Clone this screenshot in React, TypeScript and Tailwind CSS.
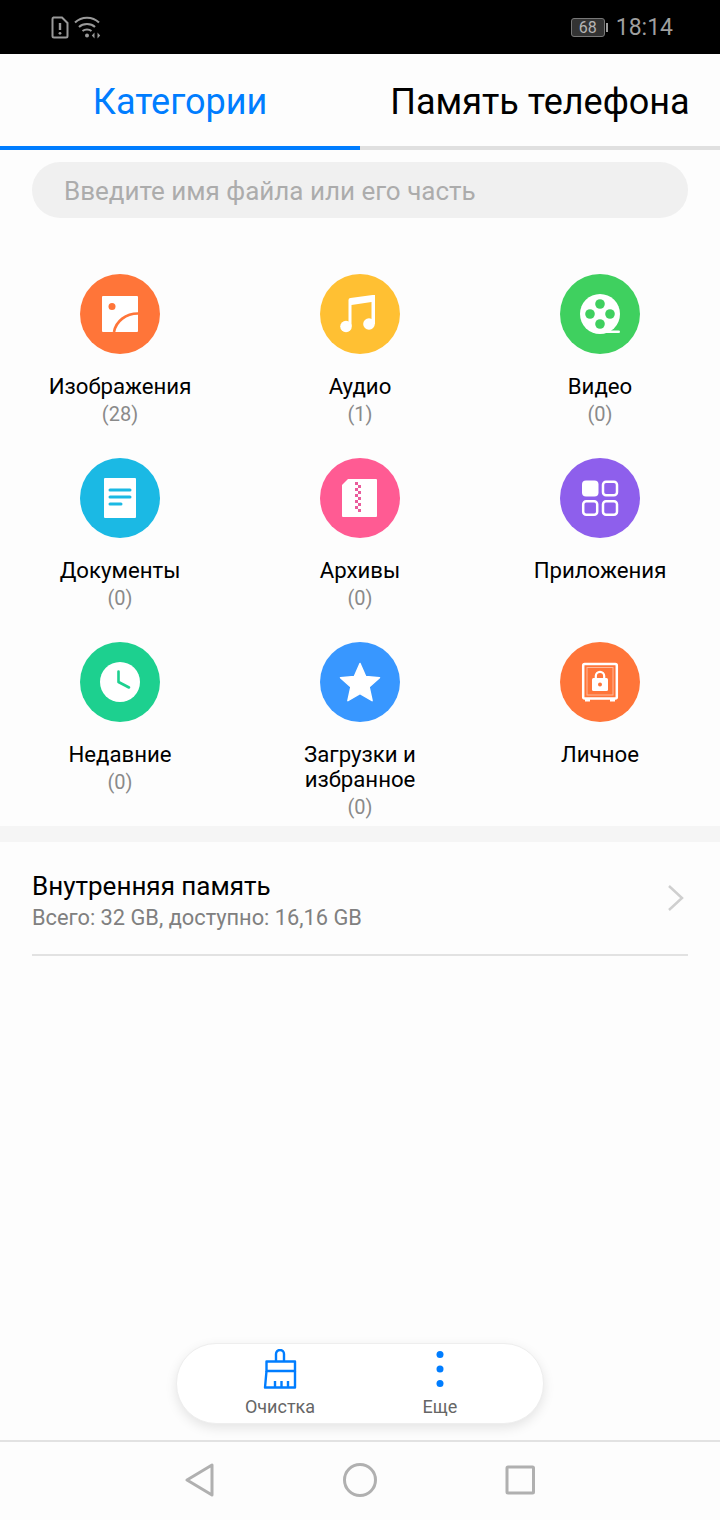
import type { ReactNode } from "react";

type Category = {
  label: ReactNode;
  count?: number;
  bg: string;
  icon: ReactNode;
};

const categories: Category[] = [
  {
    label: "Изображения",
    count: 28,
    bg: "bg-[#ff7539]",
    icon: (
      <>
        <rect x="22" y="22" width="36" height="36" rx="1" fill="#fff" />
        <circle cx="32" cy="32.5" r="3.5" fill="#ff7539" />
        <path d="M34 58C36 47 46 39.5 58 39.5" fill="none" stroke="#ff7539" strokeWidth="2.6" />
      </>
    ),
  },
  {
    label: "Аудио",
    count: 1,
    bg: "bg-[#ffc033]",
    icon: (
      <>
        <circle cx="26" cy="52.5" r="5.8" fill="#fff" />
        <circle cx="49" cy="50" r="5.8" fill="#fff" />
        <path d="M28.5 52V26a2 2 0 0 1 2-2l22-3h2.5v29h-3.5V28l-20 3v21z" fill="#fff" />
      </>
    ),
  },
  {
    label: "Видео",
    count: 0,
    bg: "bg-[#3fd05f]",
    icon: (
      <>
        <circle cx="40" cy="40" r="20" fill="#fff" />
        <rect x="40" y="56.5" width="20" height="2.6" rx="1.3" fill="#fff" />
        <circle cx="40" cy="30" r="4.8" fill="#3fd05f" />
        <circle cx="40" cy="50" r="4.8" fill="#3fd05f" />
        <circle cx="30" cy="40" r="4.8" fill="#3fd05f" />
        <circle cx="50" cy="40" r="4.8" fill="#3fd05f" />
      </>
    ),
  },
  {
    label: "Документы",
    count: 0,
    bg: "bg-[#1bb9e4]",
    icon: (
      <>
        <rect x="24" y="20" width="32" height="40" rx="1" fill="#fff" />
        <path d="M30 32H50M30 39H50M30 46H41" stroke="#1bb9e4" strokeWidth="3" strokeLinecap="round" />
      </>
    ),
  },
  {
    label: "Архивы",
    count: 0,
    bg: "bg-[#ff5b93]",
    icon: (
      <>
        <path d="M28 21H56a1 1 0 0 1 1 1V58a1 1 0 0 1-1 1H23a1 1 0 0 1-1-1V27z" fill="#fff" />
        <path
          d="M35 24h3v3h-3zM38 27h3v3h-3zM35 30h3v3h-3zM38 33h3v3h-3zM35 36h3v3h-3zM38 39h3v3h-3zM35 42h3v3h-3zM38 45h3v3h-3zM35 48h3v3h-3zM38 51h3v3h-3z"
          fill="#ea5c9c"
        />
      </>
    ),
  },
  {
    label: "Приложения",
    bg: "bg-[#8e5fec]",
    icon: (
      <>
        <rect x="22" y="22.5" width="16.5" height="16" rx="4" fill="#fff" />
        <rect x="43" y="23.7" width="14" height="13.6" rx="3" fill="none" stroke="#fff" strokeWidth="2.5" />
        <rect x="23.2" y="43.2" width="14" height="13.6" rx="3" fill="none" stroke="#fff" strokeWidth="2.5" />
        <rect x="43" y="43.2" width="14" height="13.6" rx="3" fill="none" stroke="#fff" strokeWidth="2.5" />
      </>
    ),
  },
  {
    label: "Недавние",
    count: 0,
    bg: "bg-[#1dd08f]",
    icon: (
      <>
        <circle cx="40" cy="40" r="20" fill="#fff" />
        <path d="M38.5 29.5V40L49 45.5" fill="none" stroke="#1dd08f" strokeWidth="2.6" strokeLinecap="round" strokeLinejoin="round" />
      </>
    ),
  },
  {
    label: (
      <>
        Загрузки и
        <br />
        избранное
      </>
    ),
    count: 0,
    bg: "bg-[#3897ff]",
    icon: (
      <path
        d="M40 21.5L45.7 34.5L59.5 35.8L49.1 45L52.1 58.7L40 51.6L27.9 58.7L30.9 45L20.5 35.8L34.3 34.5Z"
        fill="#fff"
        stroke="#fff"
        strokeWidth="1.5"
        strokeLinejoin="round"
      />
    ),
  },
  {
    label: "Личное",
    bg: "bg-[#ff7539]",
    icon: (
      <>
        <rect x="23.2" y="22" width="33.6" height="34.5" rx="1.5" fill="none" stroke="#fff" strokeWidth="2.5" />
        <rect x="27" y="25.5" width="26" height="27.5" fill="none" stroke="#ffb899" strokeWidth="1" />
        <path d="M25 57h5v2.5h-5zM50 57h5v2.5h-5z" fill="#fff" />
        <path d="M35.8 37v-3a4.2 4.2 0 0 1 8.4 0v3" fill="none" stroke="#fff" strokeWidth="2.2" />
        <rect x="32" y="36" width="16" height="13" rx="1.5" fill="#fff" />
        <circle cx="40" cy="42.5" r="2" fill="#ff7539" />
      </>
    ),
  },
];

function CategoryCell({ item }: { item: Category }) {
  return (
    <div className="flex h-[184px] flex-col items-center text-center">
      <div className={`h-20 w-20 rounded-full ${item.bg}`}>
        <svg viewBox="0 0 80 80" className="h-20 w-20">
          {item.icon}
        </svg>
      </div>
      <div className="mt-[20px] text-[22.2px] leading-[25px] text-black">{item.label}</div>
      {item.count !== undefined && (
        <div className="mt-[3px] text-[20px] leading-[25px] text-[#8a8a8a]">({item.count})</div>
      )}
    </div>
  );
}

export default function App() {
  return (
    <div className="flex h-[1520px] w-[720px] flex-col overflow-hidden bg-[#fdfdfd] font-['Roboto',sans-serif]">
      {/* Status bar */}
      <div className="flex h-[54px] items-center justify-between bg-black pl-[51px] pr-[47px]">
        <div className="flex items-center gap-[5px]">
          <svg width="18" height="23" viewBox="0 0 18 23" fill="none">
            <path d="M2.5 1.5H11L16.5 7V20a1.5 1.5 0 0 1-1.5 1.5H3A1.5 1.5 0 0 1 1.5 20V3A1.5 1.5 0 0 1 2.5 1.5Z" stroke="#9a9a9a" strokeWidth="2" />
            <path d="M9 7V14" stroke="#9a9a9a" strokeWidth="2.4" />
            <circle cx="9" cy="17.3" r="1.4" fill="#9a9a9a" />
          </svg>
          <svg width="28" height="24" viewBox="0 0 28 24" fill="none" stroke="#9a9a9a" strokeWidth="2">
            <path d="M1 7.5C7.5 1 18.5 1 25 7.5" />
            <path d="M5 12C9 8 17 8 21 12" />
            <path d="M8.5 16C11 14 15 14 17.5 16" />
            <circle cx="13" cy="20.5" r="2" fill="#9a9a9a" stroke="none" />
            <path d="M20.5 17.5L17.8 20.5L20.5 23.5ZM23.5 17.5L26.2 20.5L23.5 23.5Z" fill="#9a9a9a" stroke="none" />
          </svg>
        </div>
        <div className="flex items-center pt-[1px]">
          <div className="flex h-[19px] w-[34px] items-center justify-center rounded-[3px] border border-[#777] bg-[#333] text-[16px] leading-none text-[#b5b5b5]">
            68
          </div>
          <div className="ml-[1px] h-[9px] w-[2px] bg-[#9a9a9a]" />
          <span className="ml-[8px] text-[23px] leading-none text-[#9f9f9f]">18:14</span>
        </div>
      </div>

      {/* Tabs */}
      <div className="flex h-[96px]">
        <div className="flex w-[360px] items-center justify-center border-b-4 border-[#007dff] pt-[3px] text-[36px] text-[#007dff]">
          Категории
        </div>
        <div className="flex w-[360px] items-center justify-center border-b-4 border-[#e0e0e0] pt-[3px] text-[36px] text-black">
          Память телефона
        </div>
      </div>

      {/* Search */}
      <div className="mx-[32px] mt-[12px] flex h-[56px] items-center rounded-[28px] bg-[#f0f0f0] px-[32px] pt-[2px] text-[26px] text-[#acacac]">
        Введите имя файла или его часть
      </div>

      {/* Categories */}
      <div className="mt-[56px] grid grid-cols-3">
        {categories.map((item, i) => (
          <CategoryCell key={i} item={item} />
        ))}
      </div>

      <div className="h-[16px] bg-[#f5f5f5]" />

      {/* Storage row */}
      <div className="mx-[32px] flex h-[114px] items-center justify-between border-b-2 border-[#e2e2e2]">
        <div className="mt-[7px]">
          <div className="text-[26px] leading-[32px] text-black">Внутренняя память</div>
          <div className="text-[21.8px] leading-[32px] text-[#808080]">Всего: 32 GB, доступно: 16,16 GB</div>
        </div>
        <svg width="18" height="28" viewBox="0 0 18 28" fill="none" stroke="#cfcfcf" strokeWidth="2.5" className="mr-[3px]">
          <path d="M2 2L15 14L2 26" />
        </svg>
      </div>

      <div className="flex-1" />

      {/* Floating toolbar */}
      <div className="mb-[16px] flex justify-center">
        <div className="flex h-[81px] w-[368px] justify-center rounded-[40px] border border-[#eeeeee] bg-white pt-[1px] shadow-[0_4px_12px_rgba(0,0,0,0.1)]">
          <div className="flex w-[160px] flex-col items-center pt-[4px]">
            <svg width="34" height="40" viewBox="0 0 34 40" fill="none" stroke="#007dff" strokeWidth="2.4" strokeLinejoin="round">
              <path d="M13 12V5a4 4 0 0 1 8 0V12" />
              <path d="M3.5 12.5H32V22H3.5Z" />
              <path d="M3.5 22L2 38.5H32V22" />
              <path d="M12 38.5V32M18.5 38.5V32M25 38.5V32" />
            </svg>
            <span className="mt-[7px] text-[18px] leading-[22px] text-[#666]">Очистка</span>
          </div>
          <div className="flex w-[160px] flex-col items-center pt-[4px]">
            <svg width="34" height="40" viewBox="0 0 34 40" fill="#007dff">
              <circle cx="17" cy="5.5" r="3.5" />
              <circle cx="17" cy="20" r="3.5" />
              <circle cx="17" cy="34.5" r="3.5" />
            </svg>
            <span className="mt-[7px] text-[18px] leading-[22px] text-[#666]">Еще</span>
          </div>
        </div>
      </div>

      {/* Navigation bar */}
      <div className="flex h-[80px] items-center justify-center border-t-2 border-[#e2e2e2] pb-[2px]">
        <div className="flex w-[350px] items-center justify-between">
          <svg width="32" height="36" viewBox="0 0 32 36" fill="none" stroke="#b0b0b0" strokeWidth="3" strokeLinejoin="round">
            <path d="M27 3V33L2 18Z" />
          </svg>
          <svg width="34" height="34" viewBox="0 0 34 34" fill="none" stroke="#b0b0b0" strokeWidth="3">
            <circle cx="17" cy="17" r="15.5" />
          </svg>
          <svg width="32" height="32" viewBox="0 0 32 32" fill="none" stroke="#b0b0b0" strokeWidth="3" strokeLinejoin="round">
            <rect x="4" y="3" width="26.5" height="26" rx="1" />
          </svg>
        </div>
      </div>
    </div>
  );
}
